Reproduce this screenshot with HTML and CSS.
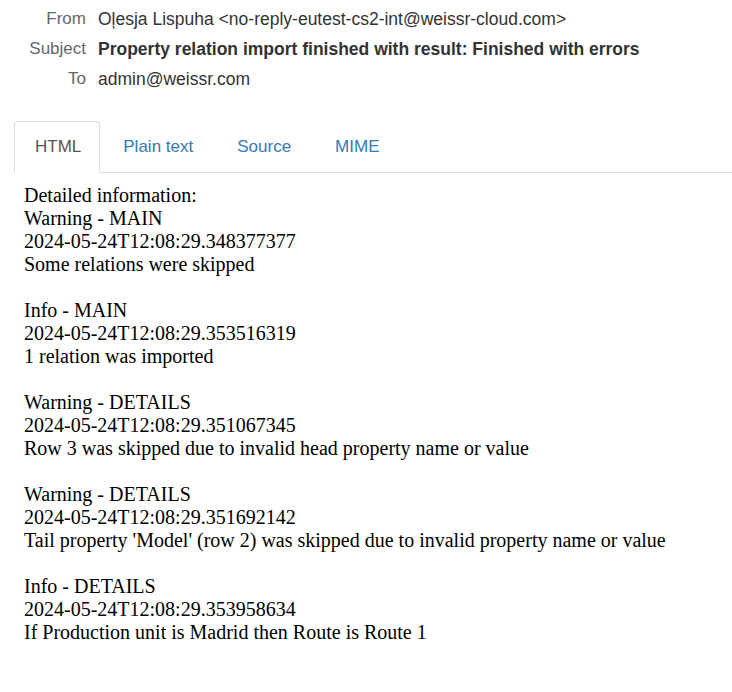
FILE: index.html
```html
<!DOCTYPE html>
<html>
<head>
<meta charset="utf-8">
<link rel="stylesheet" href="styles.css">
</head>
<body>
<div class="headers">
  <div class="label">From</div><div class="value">Oļesja Lispuha &lt;no-reply-eutest-cs2-int@weissr-cloud.com&gt;</div>
  <div class="label">Subject</div><div class="value subject">Property relation import finished with result: Finished with errors</div>
  <div class="label">To</div><div class="value">admin@weissr.com</div>
</div>
<ul class="tabs">
  <li class="tab active">HTML</li>
  <li class="tab">Plain text</li>
  <li class="tab">Source</li>
  <li class="tab">MIME</li>
</ul>
<div class="content">Detailed information:<br>Warning - MAIN<br>2024-05-24T12:08:29.348377377<br>Some relations were skipped<br><br>Info - MAIN<br>2024-05-24T12:08:29.353516319<br>1 relation was imported<br><br>Warning - DETAILS<br>2024-05-24T12:08:29.351067345<br>Row 3 was skipped due to invalid head property name or value<br><br>Warning - DETAILS<br>2024-05-24T12:08:29.351692142<br>Tail property 'Model' (row 2) was skipped due to invalid property name or value<br><br>Info - DETAILS<br>2024-05-24T12:08:29.353958634<br>If Production unit is Madrid then Route is Route 1</div>
</body>
</html>
```
FILE: styles.css
```css
html, body {
  margin: 0;
  padding: 0;
  background: #fff;
}
body {
  font-family: "Liberation Sans", Arial, sans-serif;
}
.headers {
  display: grid;
  grid-template-columns: 86px 1fr;
  column-gap: 12px;
  padding-top: 4px;
  font-size: 17px;
  line-height: 30px;
  color: #333;
}
.label {
  text-align: right;
  color: #666;
}
.value {
  white-space: nowrap;
  font-size: 17.5px;
}
.subject {
  font-weight: bold;
}
.tabs {
  list-style: none;
  display: flex;
  margin: 27px 0 0 14px;
  padding: 0;
  border-bottom: 1px solid #ddd;
  font-size: 17px;
  line-height: 24px;
}
.tab {
  padding: 13px 20px;
  margin-right: 2px;
  margin-bottom: -1px;
  border: 1px solid transparent;
  border-radius: 4px 4px 0 0;
  color: #337ab7;
}
.tab.active {
  padding-right: 18px;
  color: #555;
  border-color: #ddd #ddd transparent #ddd;
  background: #fff;
}
.content {
  padding: 11px 10px 0 24px;
  font-family: "Liberation Serif", "Times New Roman", serif;
  font-size: 20px;
  line-height: 23px;
  color: #000;
}
```
